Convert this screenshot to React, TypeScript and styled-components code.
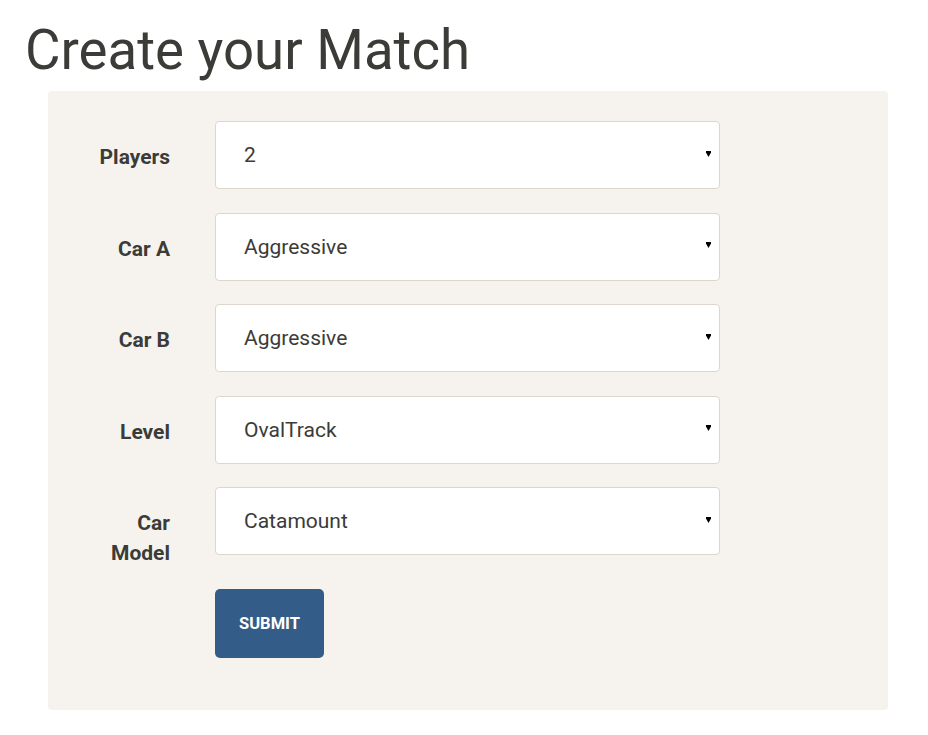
import React from "react";
import styled, { createGlobalStyle } from "styled-components";

const Global = createGlobalStyle`
  html, body { margin: 0; padding: 0; background: #ffffff; }
  body { font-family: Roboto, "Liberation Sans", sans-serif; color: #3b3b37; }
`;

const Page = styled.div`
  padding: 0 0 25px 0;
`;

const Title = styled.h1`
  margin: 0;
  padding: 17px 0 0 25px;
  font-family: Roboto, "Liberation Sans", sans-serif;
  font-weight: 400;
  font-size: 54.6px;
  line-height: 66px;
  color: #3b3b37;
  height: 91px;
  box-sizing: border-box;
`;

const Panel = styled.form`
  margin: 0 0 0 48px;
  width: 840px;
  background: #f6f3ef;
  border-radius: 4px;
  padding: 30px 0 52px 0;
  box-sizing: border-box;
  display: flex;
  flex-direction: column;
  gap: 23.5px;
`;

const Row = styled.div`
  display: flex;
  align-items: flex-start;
  gap: 45px;
`;

const Label = styled.label`
  width: 122px;
  box-sizing: border-box;
  padding: 21px 0 0 40px;
  text-align: right;
  font-size: 21px;
  line-height: 30px;
  font-weight: 700;
  color: #3b3b37;
`;

const SelectBox = styled.div`
  width: 505px;
  height: 68px;
  box-sizing: border-box;
  background: #ffffff;
  border: 1px solid #ddd6ca;
  border-radius: 4px;
  display: flex;
  align-items: center;
  justify-content: space-between;
  padding: 0 8px 0 28px;
  font-size: 21px;
  color: #3b3b37;
`;

const Value = styled.span`
  line-height: 24px;
`;

const ArrowIcon = styled.svg`
  display: block;
  margin-bottom: 3px;
`;

const Spacer = styled.div`
  width: 122px;
  flex-shrink: 0;
`;

const Button = styled.button`
  width: 109px;
  height: 69px;
  margin-top: -2.5px;
  border: none;
  border-radius: 5px;
  background: #335d88;
  color: #ffffff;
  font-family: Roboto, "Liberation Sans", sans-serif;
  font-weight: 700;
  font-size: 16.5px;
  text-transform: uppercase;
  cursor: pointer;
  padding: 0;
`;

const Arrow = () => (
  <ArrowIcon width="5" height="6" viewBox="0 0 5 6" aria-hidden>
    <polygon points="0,0 5,0 5,1.5 2.5,6 0,1.5" fill="#000" />
  </ArrowIcon>
);

const fields = [
  { label: "Players", value: "2" },
  { label: "Car A", value: "Aggressive" },
  { label: "Car B", value: "Aggressive" },
  { label: "Level", value: "OvalTrack" },
  { label: "Car Model", value: "Catamount" },
];

export default function App() {
  return (
    <Page>
      <Global />
      <Title>Create your Match</Title>
      <Panel onSubmit={(e) => e.preventDefault()}>
        {fields.map((f) => (
          <Row key={f.label}>
            <Label>{f.label}</Label>
            <SelectBox>
              <Value>{f.value}</Value>
              <Arrow />
            </SelectBox>
          </Row>
        ))}
        <Row>
          <Spacer />
          <Button type="submit">Submit</Button>
        </Row>
      </Panel>
    </Page>
  );
}
